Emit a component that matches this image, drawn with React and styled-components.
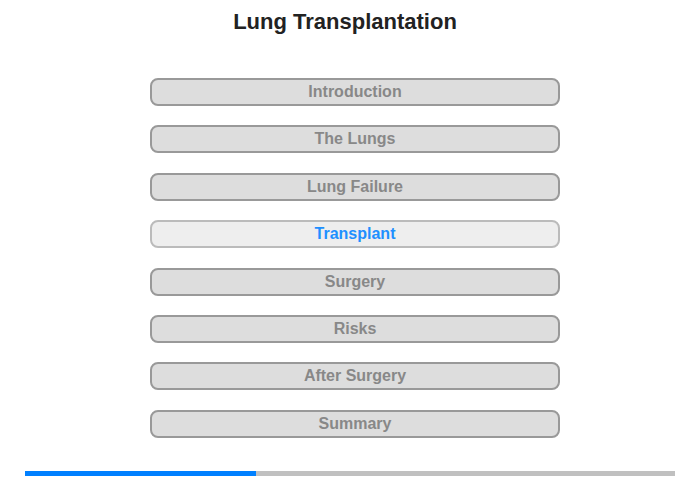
import * as React from "react";
import styled, { createGlobalStyle } from "styled-components";

const GlobalStyle = createGlobalStyle`
  body {
    margin: 0;
    background: #fff;
    font-family: "Liberation Sans", Arial, sans-serif;
  }
`;

const Page = styled.div`
  width: 700px;
  height: 480px;
  display: flex;
  flex-direction: column;
  align-items: center;
`;

const Title = styled.h1`
  margin: 9px 10px 0 0;
  font-size: 22px;
  line-height: 26px;
  font-weight: bold;
  color: #222;
`;

const Menu = styled.nav`
  margin-top: 43px;
  padding-left: 10px;
  display: flex;
  flex-direction: column;
  gap: 19.4px;
`;

const Item = styled.button`
  box-sizing: border-box;
  width: 410px;
  height: 28px;
  padding: 0;
  border-radius: 8px;
  border: 2px solid ${({ $active }) => ($active ? "#bbb" : "#999")};
  background: ${({ $active }) => ($active ? "#eee" : "#ddd")};
  color: ${({ $active }) => ($active ? "#1e90ff" : "#888")};
  font-family: "Liberation Sans", Arial, sans-serif;
  font-size: 16px;
  font-weight: bold;
  cursor: pointer;
`;

const Track = styled.div`
  margin-top: 33px;
  width: 650px;
  height: 5px;
  background: #c0c0c0;
`;

const Fill = styled.div`
  height: 100%;
  background: #0080ff;
`;

const sections = [
  "Introduction",
  "The Lungs",
  "Lung Failure",
  "Transplant",
  "Surgery",
  "Risks",
  "After Surgery",
  "Summary",
];

export default function App() {
  const [current, setCurrent] = React.useState(3);
  const progress = 231 / 650;

  return (
    <Page>
      <GlobalStyle />
      <Title>Lung Transplantation</Title>
      <Menu>
        {sections.map((name, i) => (
          <Item key={name} $active={i === current} onClick={() => setCurrent(i)}>
            {name}
          </Item>
        ))}
      </Menu>
      <Track>
        <Fill style={{ width: `${progress * 100}%` }} />
      </Track>
    </Page>
  );
}
